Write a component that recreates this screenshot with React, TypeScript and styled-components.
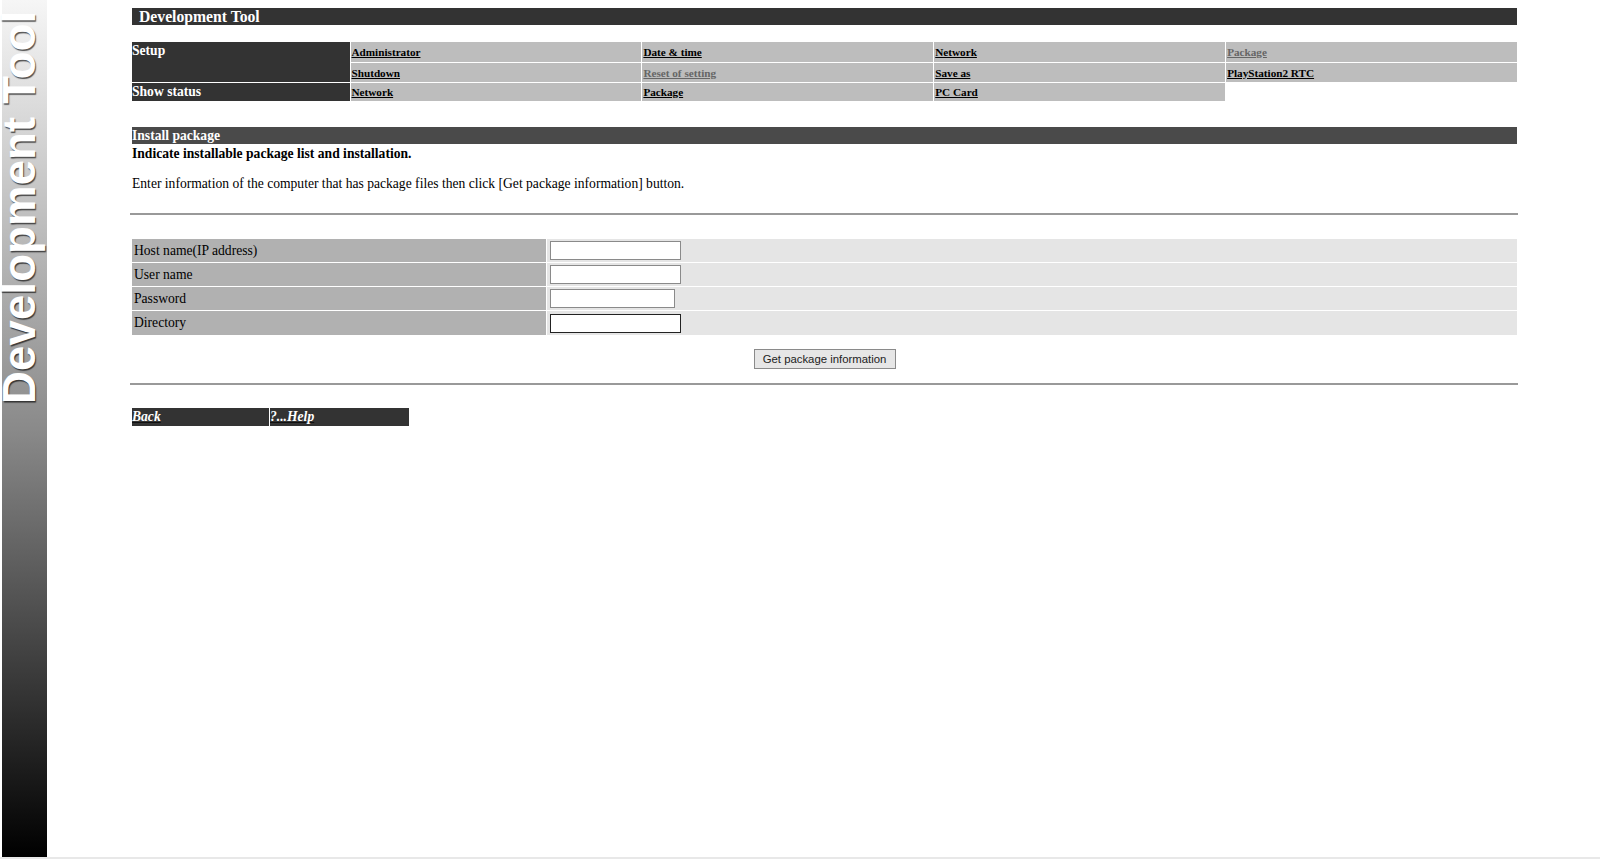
import React from 'react';
import styled, {createGlobalStyle} from 'styled-components';

const GlobalStyle = createGlobalStyle`
  html, body {
    margin: 0;
    padding: 0;
    background: #ffffff;
  }
  body {
    font-family: "Liberation Serif", "Times New Roman", serif;
    color: #000000;
  }
`;

const Page = styled.div`
  display: flex;
  align-items: flex-start;
  height: 859px;
  box-sizing: border-box;
  padding-left: 2px;
  border-bottom: 2px solid #e8e8e8;
  overflow: hidden;
`;

const Sidebar = styled.div`
  flex: 0 0 45px;
  height: 857px;
  background: linear-gradient(to bottom, #f6f6f6 0%, #8a8a8a 50%, #000000 100%);
  padding-top: 11px;
  box-sizing: border-box;
`;

const SidebarTitle = styled.div`
  writing-mode: vertical-rl;
  transform: rotate(180deg);
  height: 393px;
  width: 45px;
  font-family: "Liberation Sans", Arial, sans-serif;
  font-size: 45.5px;
  font-weight: bold;
  line-height: 35px;
  letter-spacing: 0.15px;
  white-space: nowrap;
  color: #ffffff;
  text-align: left;
  text-shadow: -1.5px 0.5px 1px rgba(0, 0, 0, 0.65);
`;

const Main = styled.main`
  flex: 0 0 1388px;
  margin-left: 83px;
  padding-top: 8px;
`;

const Inset = styled.div`
  margin: 0 1px 0 2px;
`;

const TitleBar = styled.h1`
  margin: 0;
  height: 17px;
  line-height: 17px;
  padding-left: 7px;
  background: #333333;
  color: #ffffff;
  font-size: 15.7px;
  font-weight: bold;
`;

const NavGrid = styled.nav`
  display: grid;
  grid-template-columns: 217.5px repeat(4, 1fr);
  grid-template-rows: 20px 19px 18px;
  gap: 1px;
  margin-top: 17px;
`;

const NavHeading = styled.div<{$span?: number}>`
  grid-row: span ${p => p.$span ?? 1};
  background: #333333;
  color: #ffffff;
  font-size: 13.6px;
  font-weight: bold;
  line-height: 18px;
`;

const NavCell = styled.div`
  background: #bdbdbd;
  padding-left: 1px;
  display: flex;
  align-items: center;
`;

const NavLink = styled.a<{$disabled?: boolean}>`
  color: ${p => (p.$disabled ? '#666666' : '#000000')};
  font-size: 11.2px;
  font-weight: bold;
  text-decoration: underline;
`;

const SectionBar = styled.h2`
  margin: 26px 0 0;
  height: 17px;
  line-height: 17px;
  background: #4a4a4a;
  color: #ffffff;
  font-size: 13.6px;
  font-weight: bold;
`;

const Lead = styled.p`
  margin: 1px 0 0;
  font-size: 13.6px;
  font-weight: bold;
  line-height: 18px;
`;

const Intro = styled.p`
  margin: 12px 0 0;
  font-size: 13.6px;
  line-height: 18px;
`;

const Rule = styled.hr<{$top: number}>`
  margin: ${p => p.$top}px 0 0;
  height: 2px;
  border: none;
  background: #999999;
`;

const FormGrid = styled.div`
  display: grid;
  grid-template-columns: 414px 1fr;
  grid-template-rows: 23px 23px 23px 24px;
  gap: 1px;
  margin-top: 24px;
`;

const FieldLabel = styled.label`
  background: #b1b1b1;
  font-size: 13.6px;
  line-height: 23px;
  padding-left: 2px;
`;

const FieldCell = styled.div`
  background: #e5e5e5;
  display: flex;
  align-items: center;
  padding-left: 3px;
`;

const TextInput = styled.input<{$width: number; $focused?: boolean}>`
  width: ${p => p.$width}px;
  height: 19px;
  box-sizing: border-box;
  padding: 0 2px;
  background: #ffffff;
  border: 1px solid ${p => (p.$focused ? '#222222' : '#8a8a8a')};
  outline: none;
`;

const ButtonRow = styled.div`
  display: flex;
  justify-content: center;
  margin-top: 14px;
`;

const ActionButton = styled.button`
  width: 142px;
  height: 20px;
  padding: 0;
  background: #e6e6e6;
  border: 1px solid #8a8a8a;
  color: #222222;
  font-family: "Liberation Sans", Arial, sans-serif;
  font-size: 11.35px;
`;

const FooterLinks = styled.div`
  display: grid;
  grid-template-columns: 137px 139px;
  gap: 1px;
  margin-top: 23px;
`;

const FooterLink = styled.a`
  height: 18px;
  line-height: 18px;
  background: #333333;
  color: #ffffff;
  font-size: 13.6px;
  font-weight: bold;
  font-style: italic;
  text-decoration: underline;
  text-decoration-color: #111111;
`;

const navRows = [
  [
    {label: 'Administrator'},
    {label: 'Date & time'},
    {label: 'Network'},
    {label: 'Package', disabled: true},
  ],
  [
    {label: 'Shutdown'},
    {label: 'Reset of setting', disabled: true},
    {label: 'Save as'},
    {label: 'PlayStation2 RTC'},
  ],
];

const statusLinks = ['Network', 'Package', 'PC Card'];

const fields = [
  {label: 'Host name(IP address)', width: 131},
  {label: 'User name', width: 131},
  {label: 'Password', width: 125, type: 'password'},
  {label: 'Directory', width: 131, focused: true},
];

function App() {
  return (
    <>
      <GlobalStyle />
      <Page>
        <Sidebar>
          <SidebarTitle>Development Tool</SidebarTitle>
        </Sidebar>
        <Main>
          <Inset>
            <TitleBar>Development Tool</TitleBar>
            <NavGrid>
              <NavHeading $span={2}>Setup</NavHeading>
              {navRows[0].map(item => (
                <NavCell key={item.label}>
                  <NavLink href="#" $disabled={item.disabled}>{item.label}</NavLink>
                </NavCell>
              ))}
              {navRows[1].map(item => (
                <NavCell key={item.label}>
                  <NavLink href="#" $disabled={item.disabled}>{item.label}</NavLink>
                </NavCell>
              ))}
              <NavHeading>Show status</NavHeading>
              {statusLinks.map(label => (
                <NavCell key={label}>
                  <NavLink href="#">{label}</NavLink>
                </NavCell>
              ))}
            </NavGrid>
            <SectionBar>Install package</SectionBar>
            <Lead>Indicate installable package list and installation.</Lead>
            <Intro>Enter information of the computer that has package files then click [Get package information] button.</Intro>
          </Inset>
          <Rule $top={20} />
          <Inset>
            <FormGrid>
              {fields.map(field => (
                <React.Fragment key={field.label}>
                  <FieldLabel>{field.label}</FieldLabel>
                  <FieldCell>
                    <TextInput type={field.type ?? 'text'} $width={field.width} $focused={field.focused} />
                  </FieldCell>
                </React.Fragment>
              ))}
            </FormGrid>
            <ButtonRow>
              <ActionButton type="button">Get package information</ActionButton>
            </ButtonRow>
          </Inset>
          <Rule $top={14} />
          <Inset>
            <FooterLinks>
              <FooterLink href="#">Back</FooterLink>
              <FooterLink href="#">?...Help</FooterLink>
            </FooterLinks>
          </Inset>
        </Main>
      </Page>
    </>
  );
}

export default App;
